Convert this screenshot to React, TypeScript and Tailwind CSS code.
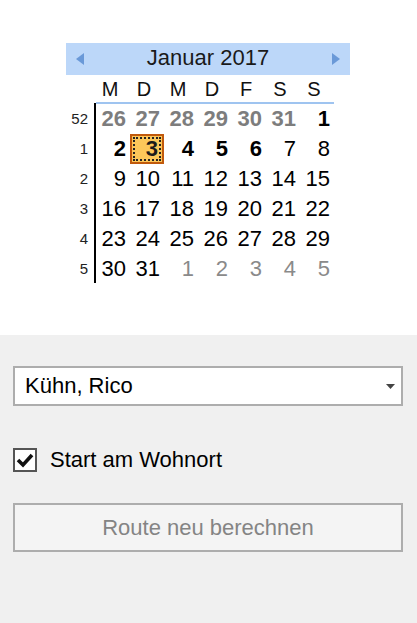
import React from "react";

type Kind = "gb" | "g" | "b" | "n" | "sel";

const weeks: { wk: string; days: [number, Kind][] }[] = [
  { wk: "52", days: [[26, "gb"], [27, "gb"], [28, "gb"], [29, "gb"], [30, "gb"], [31, "gb"], [1, "b"]] },
  { wk: "1", days: [[2, "b"], [3, "sel"], [4, "b"], [5, "b"], [6, "b"], [7, "n"], [8, "n"]] },
  { wk: "2", days: [[9, "n"], [10, "n"], [11, "n"], [12, "n"], [13, "n"], [14, "n"], [15, "n"]] },
  { wk: "3", days: [[16, "n"], [17, "n"], [18, "n"], [19, "n"], [20, "n"], [21, "n"], [22, "n"]] },
  { wk: "4", days: [[23, "n"], [24, "n"], [25, "n"], [26, "n"], [27, "n"], [28, "n"], [29, "n"]] },
  { wk: "5", days: [[30, "n"], [31, "n"], [1, "g"], [2, "g"], [3, "g"], [4, "g"], [5, "g"]] },
];

const dayNames = ["M", "D", "M", "D", "F", "S", "S"];

function DayCell({ n, kind }: { n: number; kind: Kind }) {
  if (kind === "sel") {
    return (
      <div className="h-[30px] w-[34px] border-2 border-[#c0590c] bg-[#fcc75a] p-[1px]">
        <div className="flex h-full w-full items-center justify-end border-2 border-dotted border-[#222] pr-[1px] font-bold text-[#1b1b1b]">
          {n}
        </div>
      </div>
    );
  }
  const cls =
    kind === "gb"
      ? "font-bold text-[#7d7d7d]"
      : kind === "g"
      ? "text-[#8a8a8a]"
      : kind === "b"
      ? "font-bold text-black"
      : "text-black";
  return (
    <div className={`flex h-[30px] w-[34px] items-center justify-end pr-[4px] ${cls}`}>{n}</div>
  );
}

function Calendar() {
  return (
    <div className="w-[284px] font-['Liberation_Sans',Arial,sans-serif]">
      <div className="flex h-[32px] items-center justify-between bg-[#bcd7f9] px-[10px]">
        <svg width="8" height="12" viewBox="0 0 8 12">
          <path d="M8 0 L0 6 L8 12 Z" fill="#6a99d8" />
        </svg>
        <span className="pb-[3px] text-[22px] leading-none text-[#1a1a1a]">Januar 2017</span>
        <svg width="8" height="12" viewBox="0 0 8 12">
          <path d="M0 0 L8 6 L0 12 Z" fill="#6a99d8" />
        </svg>
      </div>
      <div className="flex pl-[30px]">
        <div className="w-[238px]">
          <div className="flex h-[27px] items-center">
            {dayNames.map((d, i) => (
              <div key={i} className="w-[34px] pr-[6px] text-center text-[20px] leading-none text-[#111]">
                {d}
              </div>
            ))}
          </div>
          <div className="h-[2px] bg-[#9fc4f0]" />
        </div>
      </div>
      <div className="flex">
        <div className="w-[28px] pr-[6px] text-right text-[15px] text-[#222]">
          {weeks.map((w) => (
            <div key={w.wk} className="flex h-[30px] items-center justify-end">
              {w.wk}
            </div>
          ))}
        </div>
        <div className="-mt-[1px] mb-[1px] w-[2px] bg-black" />
        <div className="text-[22px] leading-none">
          {weeks.map((w) => (
            <div key={w.wk} className="flex">
              {w.days.map(([n, k], i) => (
                <DayCell key={i} n={n} kind={k} />
              ))}
            </div>
          ))}
        </div>
      </div>
    </div>
  );
}

export default function App() {
  return (
    <div className="flex h-[623px] w-[417px] flex-col font-['Liberation_Sans',Arial,sans-serif]">
      <div className="h-[335px] bg-white pl-[66px] pt-[43px]">
        <Calendar />
      </div>
      <div className="flex flex-1 flex-col bg-[#f0f0f0] px-[13px] pt-[31px]">
        <div className="flex h-[40px] w-[390px] items-center justify-between border-2 border-[#adadad] bg-white pl-[10px] pr-[6px]">
          <span className="text-[22px] leading-none text-black">Kühn, Rico</span>
          <svg width="9" height="5" viewBox="0 0 9 5">
            <path d="M0 0 L9 0 L4.5 5 Z" fill="#444" />
          </svg>
        </div>
        <label className="mt-[42px] flex items-center gap-[13px]">
          <span className="flex h-[24px] w-[24px] items-center justify-center border-2 border-[#555] bg-white">
            <svg width="18" height="16" viewBox="0 0 18 16">
              <path d="M2 8 L7 13 L16 3" fill="none" stroke="#111" strokeWidth="3.6" />
            </svg>
          </span>
          <span className="text-[22px] leading-none text-black">Start am Wohnort</span>
        </label>
        <button
          type="button"
          className="mt-[31px] flex h-[49px] w-[390px] items-center justify-center border-2 border-[#adadad] bg-[#f4f4f4] text-[22px] leading-none text-[#848484]"
        >
          Route neu berechnen
        </button>
      </div>
    </div>
  );
}
